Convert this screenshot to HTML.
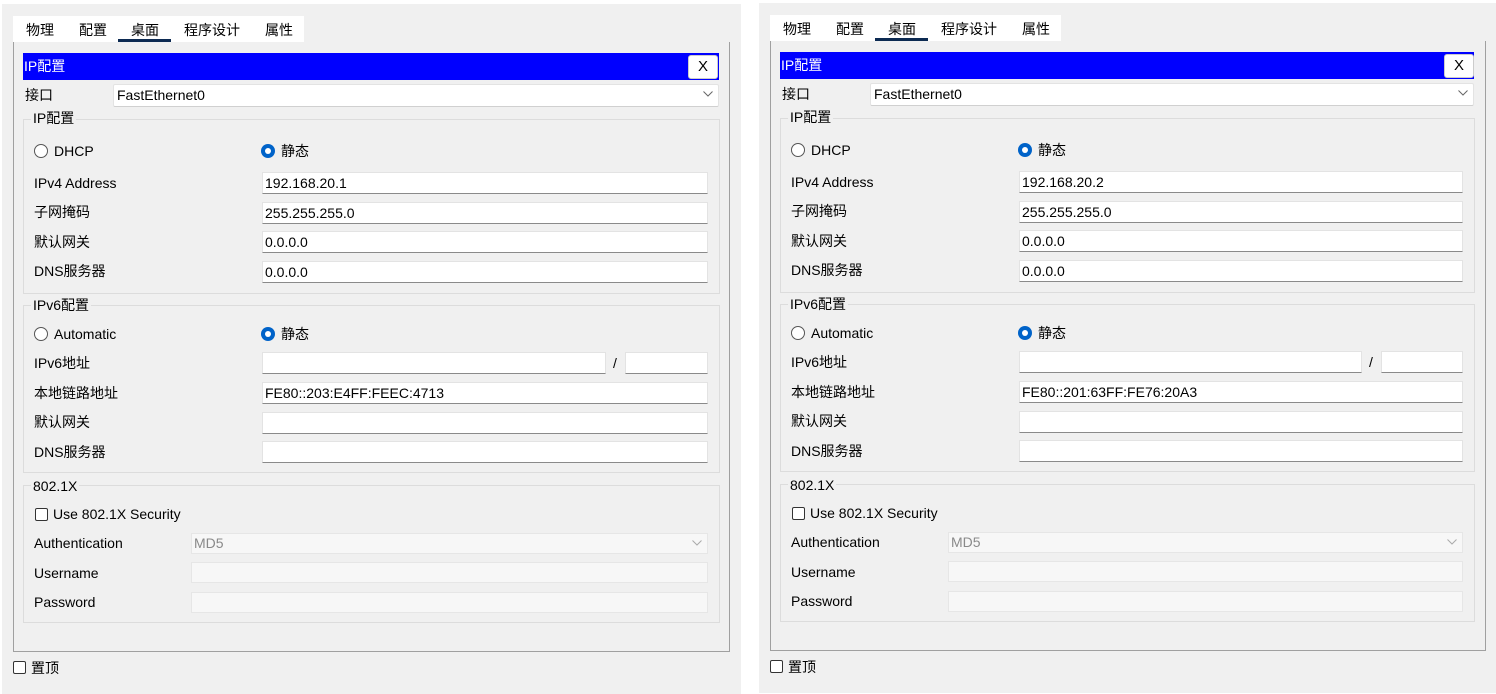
<!DOCTYPE html>
<html><head><meta charset="utf-8"><style>
*{margin:0;padding:0;box-sizing:border-box}
body{width:1496px;height:687px;background:#fff;position:relative;overflow:hidden;font-family:"Liberation Sans","Noto Sans CJK SC",sans-serif;font-size:14px;color:#000}
.p{position:absolute;background:#f0f0f0;width:739px;height:690px}
.p div,.p span{position:absolute}
.t{line-height:16px;white-space:nowrap}
.tabs{left:11px;top:12px;width:291px;height:26px;background:#fff}
.ul{top:35px;left:116px;width:53px;height:3px;background:#0c2a52}
.frame{left:11px;top:38px;width:717px;height:610px;border:1px solid #a0a0a0;border-top:none}
.bar{left:21px;top:49px;width:696px;height:27px;background:#0000ff;color:#fff}
.xb{left:686px;top:51px;width:30px;height:24px;background:#fff;border-radius:3px;border:1px solid #ccc;text-align:center;line-height:22px;font-size:15px}
.in{background:#fff;border:1px solid #e3e3e3;border-bottom:1px solid #8a8a8a;height:22px;padding-left:2px;line-height:20px}
.dis{background:#f7f7f7;border:1px solid #e6e6e6;height:21px;color:#8a8a8a;padding-left:2px;line-height:19px}
.fs{border:1px solid #dcdcdc;left:21px;width:697px}
.lg{background:#f0f0f0;padding:0 2px}
.r{width:14px;height:14px;border:1px solid #555;border-radius:50%;background:#fff}
.rs{width:14px;height:14px;border-radius:50%;background:#0063c9}
.rs::after{content:"";position:absolute;left:4px;top:4px;width:6px;height:6px;border-radius:50%;background:#fff}
.cb{width:13px;height:13px;border:1px solid #333;border-radius:2px;background:#fff}
.chev{right:5px;top:6px;width:10px;height:6px}
</style></head><body>

<div class="p" style="left:2px;top:4px">
<div class="tabs"></div>
<span class="t" style="left:24px;top:18px">物理</span>
<span class="t" style="left:77px;top:18px">配置</span>
<span class="t" style="left:129px;top:18px">桌面</span>
<span class="t" style="left:182px;top:18px">程序设计</span>
<span class="t" style="left:263px;top:18px">属性</span>
<div class="ul"></div>
<div class="frame"></div>
<div class="bar"><span class="t" style="left:1px;top:5px">IP配置</span></div>
<div class="xb">X</div>
<span class="t" style="left:23px;top:83px">接口</span>
<div class="in" style="left:111px;top:80px;width:606px;height:23px;border-bottom-color:#d0d0d0;border-radius:2px;padding-left:3px">FastEthernet0<svg class="chev" style="position:absolute" viewBox="0 0 10 6"><path d="M0.5 0.5L5 5L9.5 0.5" fill="none" stroke="#666"/></svg></div>

<div class="fs" style="top:115px;height:175px"></div>
<span class="t lg" style="left:29px;top:106px">IP配置</span>
<div class="r" style="left:32px;top:140px"></div><span class="t" style="left:52px;top:139px">DHCP</span>
<div class="rs" style="left:259px;top:140px"></div><span class="t" style="left:279px;top:139px">静态</span>
<span class="t" style="left:32px;top:171px">IPv4 Address</span><div class="in" style="left:260px;top:168px;width:446px">192.168.20.1</div>
<span class="t" style="left:32px;top:200px">子网掩码</span><div class="in" style="left:260px;top:198px;width:446px">255.255.255.0</div>
<span class="t" style="left:32px;top:230px">默认网关</span><div class="in" style="left:260px;top:227px;width:446px">0.0.0.0</div>
<span class="t" style="left:32px;top:259px">DNS服务器</span><div class="in" style="left:260px;top:257px;width:446px">0.0.0.0</div>

<div class="fs" style="top:301px;height:168px"></div>
<span class="t lg" style="left:29px;top:293px">IPv6配置</span>
<div class="r" style="left:32px;top:323px"></div><span class="t" style="left:52px;top:322px">Automatic</span>
<div class="rs" style="left:259px;top:323px"></div><span class="t" style="left:279px;top:322px">静态</span>
<span class="t" style="left:32px;top:351px">IPv6地址</span><div class="in" style="left:260px;top:348px;width:344px"></div><span class="t" style="left:611px;top:351px">/</span><div class="in" style="left:623px;top:348px;width:83px"></div>
<span class="t" style="left:32px;top:381px">本地链路地址</span><div class="in" style="left:260px;top:378px;width:446px">FE80::203:E4FF:FEEC:4713</div>
<span class="t" style="left:32px;top:410px">默认网关</span><div class="in" style="left:260px;top:408px;width:446px"></div>
<span class="t" style="left:32px;top:440px">DNS服务器</span><div class="in" style="left:260px;top:437px;width:446px"></div>

<div class="fs" style="top:481px;height:138px"></div>
<span class="t lg" style="left:29px;top:474px">802.1X</span>
<div class="cb" style="left:33px;top:504px"></div><span class="t" style="left:51px;top:502px">Use 802.1X Security</span>
<span class="t" style="left:32px;top:531px">Authentication</span><div class="dis" style="left:189px;top:529px;width:517px">MD5<svg class="chev" style="position:absolute" viewBox="0 0 10 6"><path d="M0.5 0.5L5 5L9.5 0.5" fill="none" stroke="#aaa"/></svg></div>
<span class="t" style="left:32px;top:561px">Username</span><div class="dis" style="left:189px;top:558px;width:517px"></div>
<span class="t" style="left:32px;top:590px">Password</span><div class="dis" style="left:189px;top:588px;width:517px"></div>
<div class="cb" style="left:11px;top:657px"></div><span class="t" style="left:29px;top:656px">置顶</span>
</div>

<div class="p" style="left:759px;top:3px">
<div class="tabs"></div>
<span class="t" style="left:24px;top:18px">物理</span>
<span class="t" style="left:77px;top:18px">配置</span>
<span class="t" style="left:129px;top:18px">桌面</span>
<span class="t" style="left:182px;top:18px">程序设计</span>
<span class="t" style="left:263px;top:18px">属性</span>
<div class="ul"></div>
<div class="frame" style="width:716px"></div>
<div class="bar" style="width:694px"></div>
<span class="t" style="left:22px;top:54px;color:#fff">IP配置</span>
<div class="xb" style="left:685px">X</div>
<span class="t" style="left:23px;top:83px">接口</span>
<div class="in" style="left:111px;top:80px;width:604px;height:23px;border-bottom-color:#d0d0d0;border-radius:2px;padding-left:3px">FastEthernet0<svg class="chev" style="position:absolute" viewBox="0 0 10 6"><path d="M0.5 0.5L5 5L9.5 0.5" fill="none" stroke="#666"/></svg></div>

<div class="fs" style="top:115px;height:175px;width:695px"></div>
<span class="t lg" style="left:29px;top:106px">IP配置</span>
<div class="r" style="left:32px;top:140px"></div><span class="t" style="left:52px;top:139px">DHCP</span>
<div class="rs" style="left:259px;top:140px"></div><span class="t" style="left:279px;top:139px">静态</span>
<span class="t" style="left:32px;top:171px">IPv4 Address</span><div class="in" style="left:260px;top:168px;width:444px">192.168.20.2</div>
<span class="t" style="left:32px;top:200px">子网掩码</span><div class="in" style="left:260px;top:198px;width:444px">255.255.255.0</div>
<span class="t" style="left:32px;top:230px">默认网关</span><div class="in" style="left:260px;top:227px;width:444px">0.0.0.0</div>
<span class="t" style="left:32px;top:259px">DNS服务器</span><div class="in" style="left:260px;top:257px;width:444px">0.0.0.0</div>

<div class="fs" style="top:301px;height:168px;width:695px"></div>
<span class="t lg" style="left:29px;top:293px">IPv6配置</span>
<div class="r" style="left:32px;top:323px"></div><span class="t" style="left:52px;top:322px">Automatic</span>
<div class="rs" style="left:259px;top:323px"></div><span class="t" style="left:279px;top:322px">静态</span>
<span class="t" style="left:32px;top:351px">IPv6地址</span><div class="in" style="left:260px;top:348px;width:343px"></div><span class="t" style="left:610px;top:351px">/</span><div class="in" style="left:622px;top:348px;width:82px"></div>
<span class="t" style="left:32px;top:381px">本地链路地址</span><div class="in" style="left:260px;top:378px;width:444px">FE80::201:63FF:FE76:20A3</div>
<span class="t" style="left:32px;top:410px">默认网关</span><div class="in" style="left:260px;top:408px;width:444px"></div>
<span class="t" style="left:32px;top:440px">DNS服务器</span><div class="in" style="left:260px;top:437px;width:444px"></div>

<div class="fs" style="top:481px;height:138px;width:695px"></div>
<span class="t lg" style="left:29px;top:474px">802.1X</span>
<div class="cb" style="left:33px;top:504px"></div><span class="t" style="left:51px;top:502px">Use 802.1X Security</span>
<span class="t" style="left:32px;top:531px">Authentication</span><div class="dis" style="left:189px;top:529px;width:515px">MD5<svg class="chev" style="position:absolute" viewBox="0 0 10 6"><path d="M0.5 0.5L5 5L9.5 0.5" fill="none" stroke="#aaa"/></svg></div>
<span class="t" style="left:32px;top:561px">Username</span><div class="dis" style="left:189px;top:558px;width:515px"></div>
<span class="t" style="left:32px;top:590px">Password</span><div class="dis" style="left:189px;top:588px;width:515px"></div>
<div class="cb" style="left:11px;top:657px"></div><span class="t" style="left:29px;top:656px">置顶</span>
</div>
</body></html>
